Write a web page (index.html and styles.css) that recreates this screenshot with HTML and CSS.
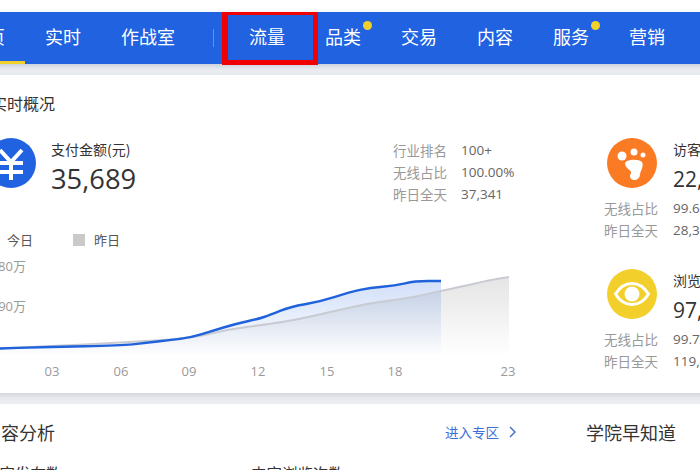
FILE: index.html
```html
<!DOCTYPE html>
<html lang="zh">
<head>
  <meta charset="utf-8">
  <link rel="stylesheet" href="styles.css">
</head>
<body>
  <div class="page">
    <nav class="nav">
      <a class="navItem active">首页</a>
      <a class="navItem">实时</a>
      <a class="navItem">作战室</a>
      <span class="navLine"></span>
      <a class="navItem marked">流量</a>
      <a class="navItem">品类<i class="dot"></i></a>
      <a class="navItem">交易</a>
      <a class="navItem">内容</a>
      <a class="navItem">服务<i class="dot"></i></a>
      <a class="navItem">营销</a>
    </nav>

    <section class="panel">
      <h2 class="panelTitle">实时概况</h2>
      <div class="overview">
        <div class="main">
          <div class="payHead">
            <svg class="icon" viewBox="0 0 50 50">
              <circle cx="25" cy="25" r="25" fill="#2062e0"/>
              <path d="M14 12 25 24 36 12M13 25H37M13 34H37M25 24V42" fill="none" stroke="#fff" stroke-width="4"/>
            </svg>
            <div class="metric">
              <div class="metricName">支付金额(元)</div>
              <div class="metricValue big">35,689</div>
            </div>
            <div class="stats payStats">
              <span class="statName">行业排名</span><span class="statValue">100+</span>
              <span class="statName">无线占比</span><span class="statValue">100.00%</span>
              <span class="statName">昨日全天</span><span class="statValue">37,341</span>
            </div>
          </div>

          <div class="legend">
            <span class="legendItem"><i class="swatch today"></i>今日</span>
            <span class="legendItem"><i class="swatch yesterday"></i>昨日</span>
          </div>

          <svg class="chart" width="530" height="132" viewBox="-14 252 530 132">
            <defs>
              <linearGradient id="blueFill" x1="0" y1="0" x2="0" y2="1">
                <stop offset="0" stop-color="#2062e0" stop-opacity=".2"/>
                <stop offset="1" stop-color="#2062e0" stop-opacity="0"/>
              </linearGradient>
              <linearGradient id="greyFill" x1="0" y1="0" x2="0" y2="1">
                <stop offset="0" stop-color="#999" stop-opacity=".26"/>
                <stop offset="1" stop-color="#999" stop-opacity="0"/>
              </linearGradient>
            </defs>
            <path d="M-14 349L18 347.500Q50 346 85 344.400Q120 342.700 155 340.600Q190 338.500 210 333.800Q230 329 250 326.500Q270 324 285 321.500Q300 319 315 315.500Q330 312 350 307.500Q370 303 390 300.500Q410 298 425.500 294.400Q441 290.700 450.500 288.900Q460 287 475 283.500Q490 280 499.500 278.500L509 277V356H-14Z" fill="url(#greyFill)"/>
            <path d="M-14 349L18 347.900Q50 346.700 85 346.200Q120 345.700 132.500 344.400Q145 343 157.500 341.500Q170 340 180 338.900Q190 337.700 201 334.400Q212 331 223.500 327.500Q235 324 246.500 321.500Q258 319 264 317Q270 315 280 310.900Q290 306.700 305 304.200Q320 301.700 335 296.900Q350 292 360 289.900Q370 287.700 382.500 286.700Q395 285.700 405 283.400Q415 281 428 281L441 281V356H-14Z" fill="url(#blueFill)"/>
            <path d="M-14 349L18 347.500Q50 346 85 344.400Q120 342.700 155 340.600Q190 338.500 210 333.800Q230 329 250 326.500Q270 324 285 321.500Q300 319 315 315.500Q330 312 350 307.500Q370 303 390 300.500Q410 298 425.500 294.400Q441 290.700 450.500 288.900Q460 287 475 283.500Q490 280 499.500 278.500L509 277" fill="none" stroke="#c8cbd2" stroke-width="2"/>
            <path d="M-14 349L18 347.900Q50 346.700 85 346.200Q120 345.700 132.500 344.400Q145 343 157.500 341.500Q170 340 180 338.900Q190 337.700 201 334.400Q212 331 223.500 327.500Q235 324 246.500 321.500Q258 319 264 317Q270 315 280 310.900Q290 306.700 305 304.200Q320 301.700 335 296.900Q350 292 360 289.900Q370 287.700 382.500 286.700Q395 285.700 405 283.400Q415 281 428 281L441 281" fill="none" stroke="#2062dc" stroke-width="2.400"/>
            <text class="axis" x="26" y="271" text-anchor="end">180万</text>
            <text class="axis" x="26" y="311" text-anchor="end">90万</text>
            <text class="axis" x="52" y="376" text-anchor="middle">03</text>
            <text class="axis" x="121" y="376" text-anchor="middle">06</text>
            <text class="axis" x="189" y="376" text-anchor="middle">09</text>
            <text class="axis" x="258" y="376" text-anchor="middle">12</text>
            <text class="axis" x="327" y="376" text-anchor="middle">15</text>
            <text class="axis" x="395" y="376" text-anchor="middle">18</text>
            <text class="axis" x="508" y="376" text-anchor="middle">23</text>
          </svg>
        </div>

        <div class="side">
          <div class="sideBlock">
            <div class="sideHead">
              <svg class="icon" viewBox="0 0 50 50">
                <circle cx="25" cy="25" r="25" fill="#fb7a24"/>
                <circle cx="15" cy="18" r="4.500" fill="#fff"/>
                <circle cx="27" cy="14" r="3.500" fill="#fff"/>
                <circle cx="36" cy="17" r="2.500" fill="#fff"/>
                <path d="M18 25C20 21 32 21 35 24 37 28 34 32 33 36 33 40 30 42 27 42 23 42 22 38 24 35 25 32 18 31 18 25Z" fill="#fff"/>
              </svg>
              <div class="metric">
                <div class="metricName">访客数</div>
                <div class="metricValue">22,416</div>
              </div>
            </div>
            <div class="stats sideStats">
              <span class="statName">无线占比</span><span class="statValue">99.61%</span>
              <span class="statName">昨日全天</span><span class="statValue">28,356</span>
            </div>
          </div>

          <div class="sideBlock">
            <div class="sideHead">
              <svg class="icon" viewBox="0 0 50 50">
                <circle cx="25" cy="25" r="25" fill="#f2cf2a"/>
                <path d="M8.500 25C17 11 33 11 41.500 25 33 39 17 39 8.500 25Z" fill="none" stroke="#fff" stroke-width="3"/>
                <circle cx="25" cy="25" r="7.500" fill="#fff"/>
              </svg>
              <div class="metric">
                <div class="metricName">浏览量</div>
                <div class="metricValue">97,208</div>
              </div>
            </div>
            <div class="stats sideStats">
              <span class="statName">无线占比</span><span class="statValue">99.70%</span>
              <span class="statName">昨日全天</span><span class="statValue">119,402</span>
            </div>
          </div>
        </div>
      </div>
    </section>

    <section class="lower">
      <div class="content">
        <div class="contentHead">
          <h2 class="lowerTitle">内容分析</h2>
          <a class="enter">进入专区
            <svg class="chevron" width="7" height="12" viewBox="0 0 7 12"><path d="M1 1 6 6 1 11" fill="none" stroke="#4a72c8" stroke-width="1.500"/></svg>
          </a>
        </div>
        <div class="contentCells">
          <span class="cellName">内容发布数</span>
          <span class="cellName">内容浏览次数</span>
        </div>
      </div>
      <h2 class="lowerTitle academy">学院早知道</h2>
    </section>
  </div>
</body>
</html>
```

FILE: styles.css
```css
html, body {
  margin: 0;
  height: 470px;
  overflow: hidden;
  background-color: #fff;
}

.page {
  width: 860px;
  margin: 12px 0 0 -51px;
  padding-bottom: 40px;
  background-color: #eceef2;
  color: #333;
  font-family: "Noto Sans CJK SC", "Open Sans", sans-serif;
}

/* top bar */
.nav {
  display: flex;
  align-items: center;
  height: 52px;
  background-color: #2062e0;
  box-shadow: 0 2px 6px rgba(40, 60, 100, 0.2);
}

.navItem {
  position: relative;
  padding: 0 20px 3px;
  color: #fff;
  font-size: 18px;
  line-height: 49px;
  white-space: nowrap;
}

.navItem.active {
  box-shadow: inset 0 -3px 0 #f2d02c;
}

.navItem.marked::after {
  content: "";
  position: absolute;
  top: 0;
  left: -7px;
  width: 96px;
  height: 53px;
  box-sizing: border-box;
  border: solid #f00000;
  border-width: 3px 5px 5px 6px;
}

.navLine {
  width: 1px;
  height: 18px;
  margin: 0 15px 0 18px;
  background-color: rgba(255, 255, 255, 0.3);
}

.dot {
  position: absolute;
  top: 9px;
  right: 9px;
  width: 9px;
  height: 9px;
  border-radius: 50%;
  background-color: #f2d02c;
}

/* realtime panel */
.panel {
  height: 302px;
  margin-top: 11px;
  padding: 16px 0 0 37px;
  background-color: #fff;
  box-shadow: 0 2px 6px rgba(40, 50, 70, 0.16);
}

.panelTitle {
  margin: 0 0 0 5px;
  font-size: 16px;
  font-weight: normal;
  line-height: 24px;
}

.overview {
  display: flex;
  margin-top: 23px;
}

.main {
  width: 530px;
}

.payHead {
  display: flex;
  height: 50px;
}

.icon {
  flex: none;
  width: 50px;
  height: 50px;
}

.metric {
  margin-left: 15px;
  white-space: nowrap;
}

.metricName {
  margin-top: 1px;
  font-size: 14px;
  line-height: 20px;
}

.metricValue {
  margin-top: 8px;
  font-family: "Open Sans", sans-serif;
  font-size: 21px;
  line-height: 24px;
}

.metricValue.big {
  margin-top: 2px;
  font-size: 27.3px;
  line-height: 36px;
}

.stats {
  display: grid;
  font-size: 13.5px;
  line-height: 22px;
  white-space: nowrap;
}

.payStats {
  grid-template-columns: 68px 55px;
  margin-left: auto;
  padding-top: 1px;
}

.sideStats {
  grid-template-columns: 69px auto;
  margin-top: 9px;
}

.statName {
  color: #999;
}

.statValue {
  color: #666;
  font-family: "Open Sans", sans-serif;
}

.legend {
  display: flex;
  gap: 40px;
  height: 25px;
  margin-top: 39px;
  font-size: 13px;
  line-height: 24px;
  color: #555;
}

.legendItem {
  display: flex;
  align-items: center;
}

.swatch {
  width: 12px;
  height: 12px;
  margin-right: 9px;
}

.swatch.today {
  background-color: #2062e0;
}

.swatch.yesterday {
  background-color: #c9c9c9;
}

.chart {
  display: block;
}

.axis {
  fill: #999;
  font-family: "Open Sans", "Noto Sans CJK SC", sans-serif;
  font-size: 13px;
}

.side {
  margin-left: 88px;
  width: 200px;
}

.sideBlock + .sideBlock {
  margin-top: 28px;
}

.sideHead {
  display: flex;
  height: 50px;
  margin-left: 3px;
}

.sideHead .metric {
  margin-left: 16px;
}

/* lower part */
.lower {
  display: flex;
  height: 120px;
  margin-top: 11px;
  padding: 15px 0 0 34px;
  background-color: #fff;
}

.content {
  width: 533px;
}

.contentHead {
  display: flex;
  align-items: center;
  justify-content: space-between;
}

.lowerTitle {
  margin: 0;
  font-size: 18px;
  font-weight: normal;
  line-height: 26px;
}

.enter {
  display: flex;
  align-items: center;
  gap: 10px;
  color: #3f6fd8;
  font-size: 13.5px;
}

.contentCells {
  display: grid;
  grid-template-columns: 267px auto;
  margin-top: 17px;
  padding-left: 1px;
  font-size: 15.5px;
  line-height: 22px;
}

.academy {
  margin-left: 70px;
}
```
